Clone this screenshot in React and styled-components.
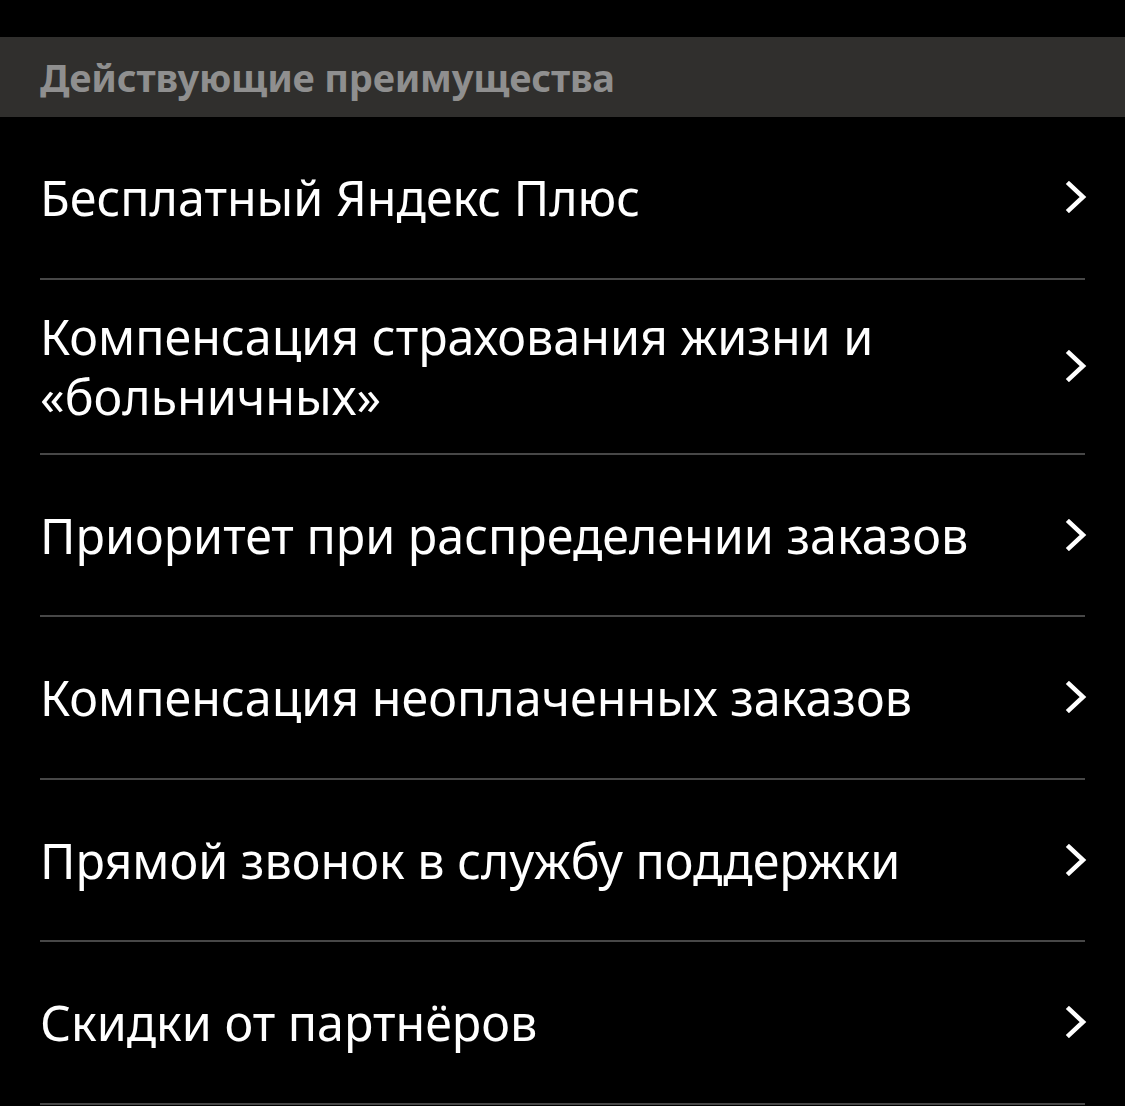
import React from "react";
import styled, { createGlobalStyle } from "styled-components";

const Global = createGlobalStyle`
  html, body { margin: 0; padding: 0; background: #000; }
  body { font-family: "Noto Sans", "Open Sans", sans-serif; -webkit-font-smoothing: antialiased; }
`;

const Page = styled.div`
  background: #000;
  padding-top: 37px;
  min-height: 1106px;
  box-sizing: border-box;
`;

const SectionHeader = styled.div`
  height: 80px;
  background: #302f2d;
  display: flex;
  align-items: center;
  padding: 0 40px;
  color: #8f8f8f;
  font-weight: 700;
  font-size: 38px;
  letter-spacing: -0.2px;
`;

const List = styled.div`
  padding: 0 40px;
`;

const Row = styled.div`
  display: flex;
  align-items: center;
  justify-content: space-between;
  min-height: 162.5px;
  box-sizing: border-box;
  padding: 26.5px 0;
  border-bottom: 2px solid #474747;
`;

const Title = styled.div`
  color: #fff;
  font-size: 48.4px;
  line-height: 60px;
  max-width: 980px;
`;

const Chevron = () => (
  <svg width="22" height="32" viewBox="0 0 22 32" fill="none">
    <polyline points="4,3 18,16 4,29" stroke="#fff" strokeWidth="4.5" strokeLinecap="square" strokeLinejoin="miter" />
  </svg>
);

const ChevronBox = styled.div`
  display: flex;
  align-items: center;
  margin-right: -2px;
`;

const items = [
  "Бесплатный Яндекс Плюс",
  "Компенсация страхования жизни и «больничных»",
  "Приоритет при распределении заказов",
  "Компенсация неоплаченных заказов",
  "Прямой звонок в службу поддержки",
  "Скидки от партнёров",
];

export default function App() {
  return (
    <>
      <Global />
      <Page>
        <SectionHeader>Действующие преимущества</SectionHeader>
        <List>
          {items.map((t) => (
            <Row key={t}>
              <Title>{t}</Title>
              <ChevronBox>
                <Chevron />
              </ChevronBox>
            </Row>
          ))}
        </List>
      </Page>
    </>
  );
}
